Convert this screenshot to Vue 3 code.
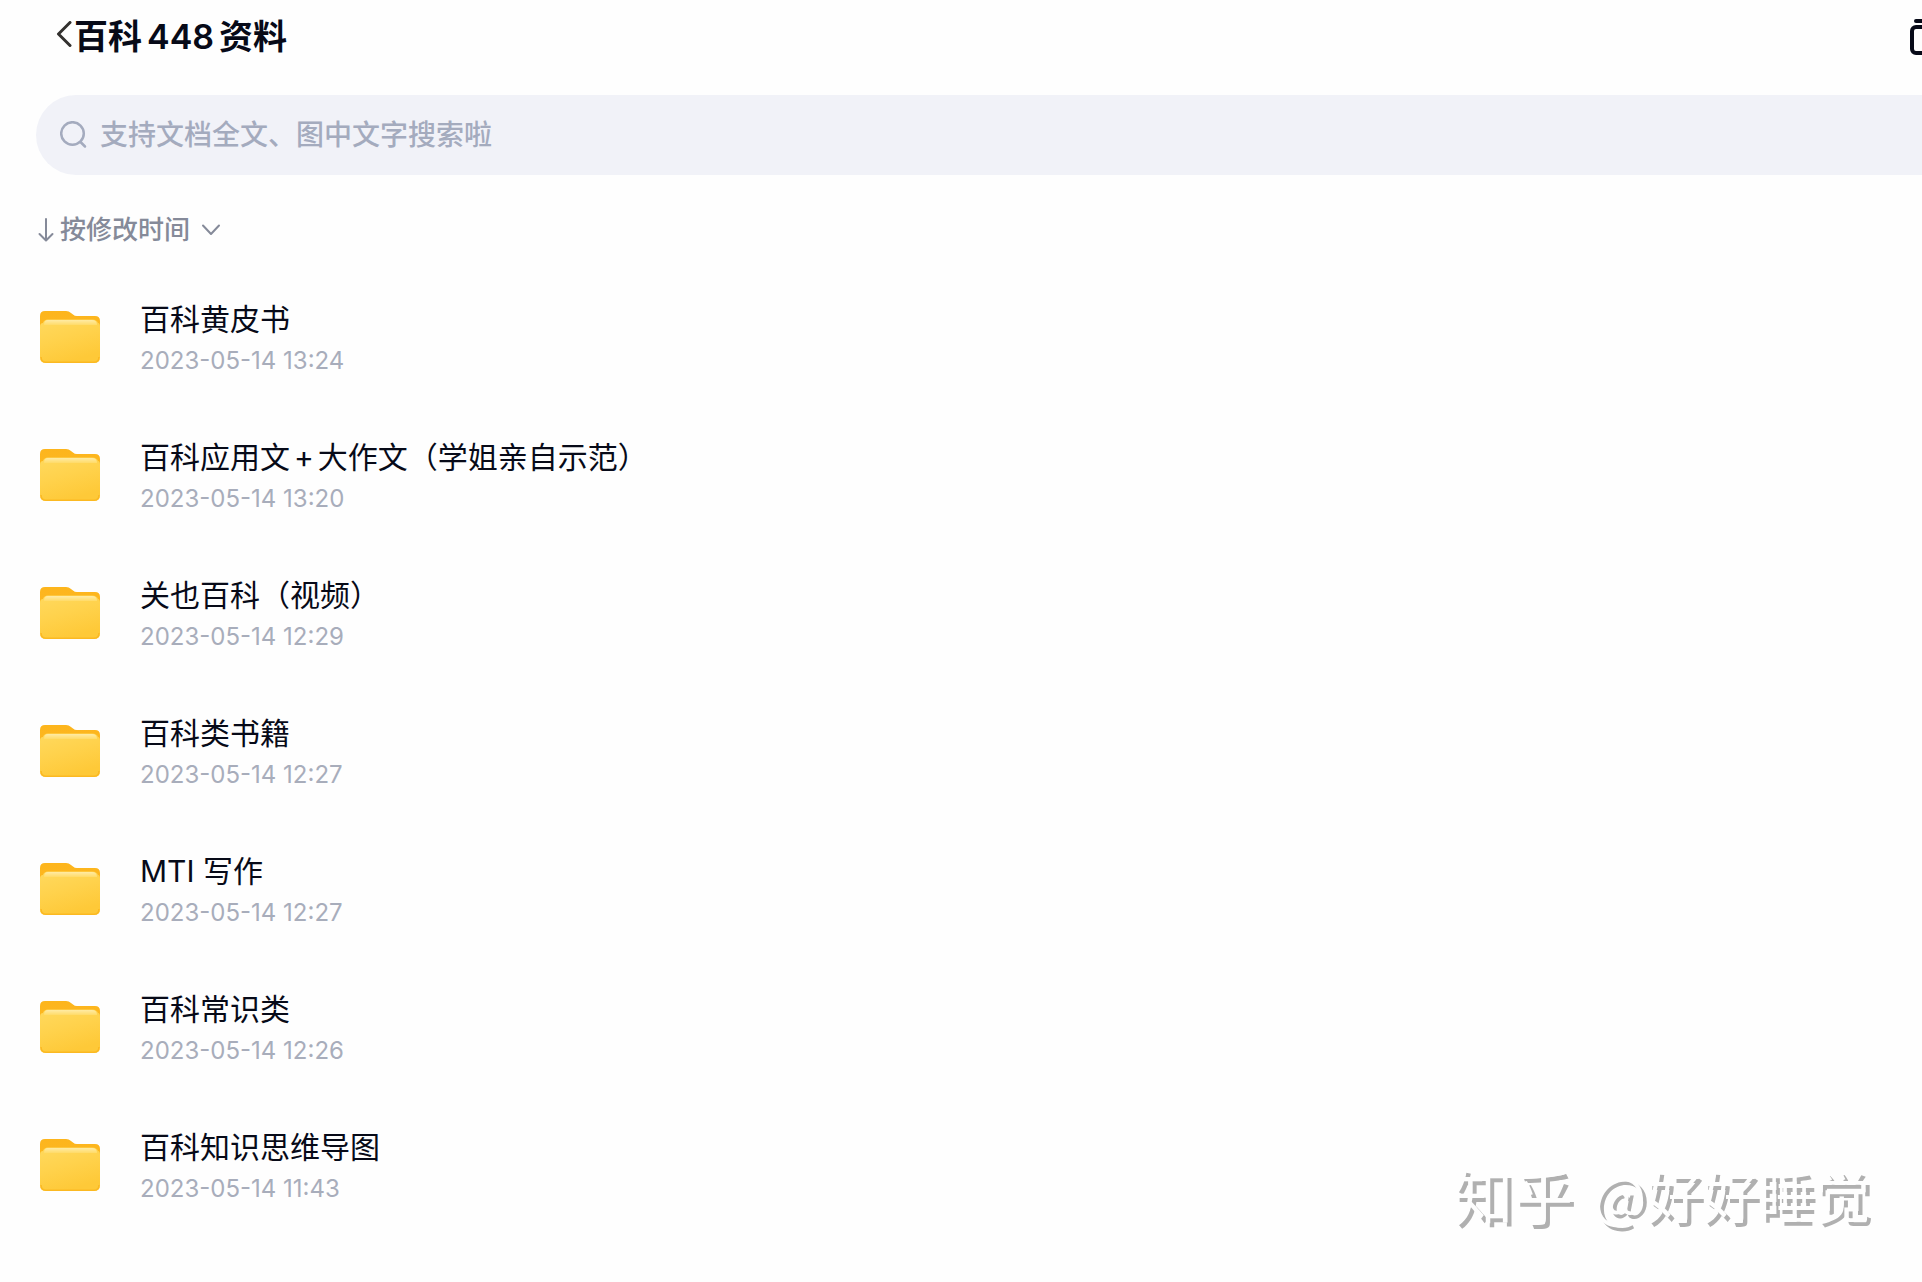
<script setup>
const folders = [
  { name: ['百科黄皮书'], time: '2023-05-14 13:24' },
  { name: ['百科应用文', '+', '大作文（学姐亲自示范）'], time: '2023-05-14 13:20' },
  { name: ['关也百科（视频）'], time: '2023-05-14 12:29' },
  { name: ['百科类书籍'], time: '2023-05-14 12:27' },
  { name: ['MTI 写作'], time: '2023-05-14 12:27' },
  { name: ['百科常识类'], time: '2023-05-14 12:26' },
  { name: ['百科知识思维导图'], time: '2023-05-14 11:43' },
]
</script>

<template>
  <div class="page">
    <header class="header">
      <button class="icon-button back" type="button" aria-label="返回">
        <svg width="16" height="26" viewBox="0 0 16 26" fill="none" stroke="#33312f" stroke-width="3" stroke-linecap="round" stroke-linejoin="round">
          <path d="M14 1.500 2.500 13 14 24.500" />
        </svg>
      </button>
      <h1 class="title"><span>百科</span><span>448</span><span>资料</span></h1>
      <button class="icon-button transfer" type="button" aria-label="传输列表">
        <svg width="40" height="36" viewBox="0 0 40 36" fill="none" stroke="#070a18" stroke-width="4" stroke-linecap="round">
          <path d="M6 2H34" />
          <rect x="2" y="8" width="36" height="26" rx="4" />
        </svg>
      </button>
    </header>

    <label class="search">
      <svg width="28" height="28" viewBox="0 0 28 28" fill="none" stroke="#a4abbe" stroke-width="2.500" stroke-linecap="round">
        <circle cx="12.500" cy="12.500" r="11.300" />
        <path d="M20.500 21 25 25.500" />
      </svg>
      <input type="search" aria-label="搜索" placeholder="支持文档全文、图中文字搜索啦" />
    </label>

    <button class="sort" type="button">
      <svg width="16" height="24" viewBox="0 0 16 24" fill="none" stroke="#858a99" stroke-width="2" stroke-linecap="round" stroke-linejoin="round">
        <path d="M8 1V22M1.500 16 8 22.500 14.500 16" />
      </svg>
      <span class="sort-label">按修改时间</span>
      <svg width="20" height="12" viewBox="0 0 20 12" fill="none" stroke="#858a99" stroke-width="2" stroke-linecap="round" stroke-linejoin="round">
        <path d="M2 1.500 10 10 18 1.500" />
      </svg>
    </button>

    <svg class="defs" width="0" height="0" aria-hidden="true">
      <defs>
        <linearGradient id="folder-back" x1="0" y1="0" x2="0" y2="1">
          <stop offset="0" stop-color="#fdb51c" />
          <stop offset="1" stop-color="#fcb824" />
        </linearGradient>
        <linearGradient id="folder-front" x1="0" y1="0" x2="0.400" y2="1">
          <stop offset="0" stop-color="#ffd95e" />
          <stop offset="0.500" stop-color="#ffd24c" />
          <stop offset="1" stop-color="#fec938" />
        </linearGradient>
        <linearGradient id="folder-edge" x1="0" y1="0" x2="0" y2="1">
          <stop offset="0" stop-color="#ffeba4" />
          <stop offset="1" stop-color="#ffdb68" />
        </linearGradient>
      </defs>
    </svg>

    <ul class="list">
      <li v-for="folder in folders" :key="folder.name.join('')">
        <a class="row" href="#">
          <svg class="folder" width="60" height="52" viewBox="0 0 60 52">
            <path fill="url(#folder-back)" d="M0 5Q0 0 5 0H26Q29 0 31 2L33 3.500Q34.500 5 37 5H55Q60 5 60 10V30H0Z" />
            <path fill="url(#folder-front)" d="M0 16Q0 12 3 12Q4 8.500 8 8.500H52Q57 8.500 58 12Q60 12 60 16V46Q60 52 54 52H6Q0 52 0 46Z" />
            <path fill="url(#folder-edge)" d="M4 14Q4 9 8 9H52Q57 9 57 14Z" />
            <path fill="none" stroke="#fbb922" stroke-width="1.500" d="M1 46Q1 51.200 6 51.200H54Q59 51.200 59 46" />
          </svg>
          <span class="text">
            <span class="name"><span v-for="part in folder.name" :key="part">{{ part }}</span></span>
            <time class="time">{{ folder.time }}</time>
          </span>
        </a>
      </li>
    </ul>

    <p class="watermark"><span class="brand">知乎</span><span>@好好睡觉</span></p>
  </div>
</template>

<style>
body {
  margin: 0;
  background: #fefefe;
}
</style>

<style scoped>
.page {
  position: relative;
  box-sizing: border-box;
  min-height: 100vh;
  overflow: hidden;
  font-family: Inter, "Noto Sans CJK SC", sans-serif;
  color: #070a18;
}

button {
  padding: 0;
  border: 0;
  background: none;
  font: inherit;
  cursor: pointer;
}

svg {
  display: block;
  flex: none;
}

.defs {
  position: absolute;
}

.header {
  display: flex;
  align-items: center;
  height: 74px;
  padding-left: 56px;
}

.icon-button {
  display: flex;
  flex: none;
}

.back {
  padding-bottom: 6px;
}

.title {
  display: flex;
  gap: 5px;
  margin: 0 0 0 2px;
  font-size: 34px;
  line-height: 48px;
  font-weight: 600;
}

.transfer {
  width: 12px;
  margin-left: auto;
  overflow: hidden;
}

.search {
  display: flex;
  align-items: center;
  gap: 12px;
  height: 80px;
  margin: 21px 0 0 36px;
  padding-left: 24px;
  border-radius: 40px 0 0 40px;
  background: #f1f2f8;
}

.search input {
  flex: 1;
  min-width: 0;
  padding: 0;
  border: 0;
  outline: 0;
  background: none;
  font: 500 28px/40px Inter, "Noto Sans CJK SC", sans-serif;
  color: #070a18;
}

.search input::placeholder {
  color: #a4abbe;
  opacity: 1;
}

.sort {
  display: flex;
  align-items: center;
  height: 40px;
  margin: 35px 0 0 38px;
  color: #858a99;
}

.sort-label {
  margin: 0 11px 0 6px;
  font-size: 26px;
  line-height: 40px;
  font-weight: 500;
}

.list {
  margin: 18px 0 0;
  padding: 0;
  list-style: none;
}

.row {
  display: flex;
  align-items: center;
  gap: 40px;
  height: 138px;
  padding-left: 40px;
  color: inherit;
  text-decoration: none;
}

.text {
  display: flex;
  flex-direction: column;
  gap: 2px;
  padding-top: 2px;
}

.name {
  display: flex;
  gap: 4px;
  font-size: 30px;
  line-height: 44px;
  white-space: pre;
}

.time {
  font-size: 24px;
  line-height: 36px;
  color: #a8adbb;
}

.watermark {
  position: absolute;
  right: 52px;
  bottom: 48px;
  display: flex;
  align-items: center;
  gap: 20px;
  margin: 0;
  font-family: "Noto Sans CJK SC", sans-serif;
  font-size: 56px;
  line-height: 80px;
  color: #fefefe;
  text-shadow: 4px 4px 0 #b0b0b0;
}

.brand {
  font-size: 60px;
}
</style>
